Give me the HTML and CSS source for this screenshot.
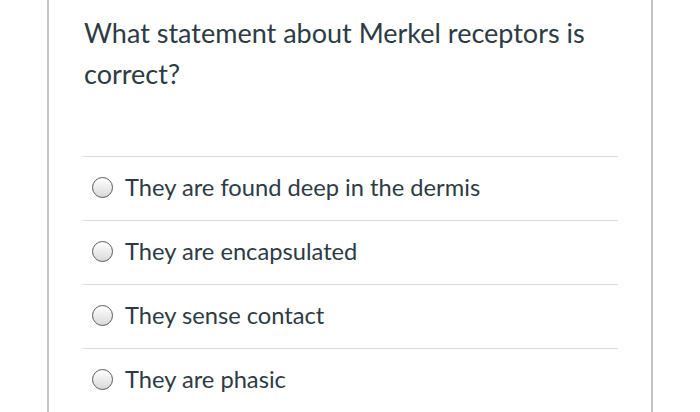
FILE: index.html
```html
<!DOCTYPE html>
<html>
<head>
<meta charset="utf-8">
<link rel="stylesheet" href="styles.css">
</head>
<body>
<div class="card">
  <div class="question">What statement about Merkel receptors is correct?</div>
  <ul class="answers">
    <li class="answer"><span class="radio"></span><span class="label">They are found deep in the dermis</span></li>
    <li class="answer"><span class="radio"></span><span class="label">They are encapsulated</span></li>
    <li class="answer"><span class="radio"></span><span class="label">They sense contact</span></li>
    <li class="answer"><span class="radio"></span><span class="label">They are phasic</span></li>
  </ul>
</div>
</body>
</html>
```
FILE: styles.css
```css
html, body {
  margin: 0;
  padding: 0;
  background: #ffffff;
  overflow: hidden;
}
body {
  font-family: Lato, "Open Sans", sans-serif;
  color: #2d3b45;
}
.card {
  margin-left: 47px;
  width: 602px;
  height: 400px;
  border-left: 2px solid #c4c4c4;
  border-right: 2px solid #c4c4c4;
  box-sizing: content-box;
  padding: 12px 0 0 0;
}
.question {
  margin-left: 35px;
  width: 540px;
  font-size: 27px;
  line-height: 41px;
}
.answers {
  list-style: none;
  margin: 62px 0 0 34px;
  padding: 0;
  width: 535px;
}
.answer {
  display: flex;
  align-items: center;
  height: 60px;
  border-top: 1px solid #dcdcdc;
  padding-left: 9px;
  padding-bottom: 3px;
}
.radio {
  width: 19px;
  height: 19px;
  border-radius: 50%;
  border: 1.5px solid #5a5a5a;
  background: linear-gradient(#ffffff, #d9d9d9);
  margin-right: 12px;
  flex: none;
}
.label {
  font-size: 23.7px;
  line-height: 28px;
}
```
